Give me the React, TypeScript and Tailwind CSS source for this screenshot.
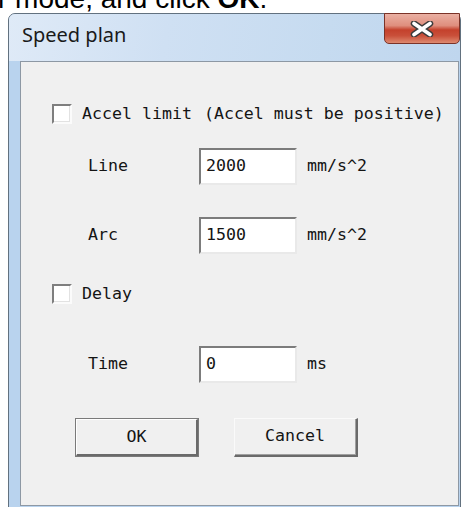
import React from "react";

const mono = "font-['DejaVu_Sans_Mono',monospace] text-[16.6px] leading-none text-[#141414]";

function Check() {
  return (
    <div className="w-[20px] h-[20px] shrink-0 border-t-2 border-l-2 border-t-[#7e7e7e] border-l-[#7e7e7e] border-b-2 border-r-2 border-b-[#fbfbfb] border-r-[#fbfbfb]">
      <div className="w-full h-full bg-white border-b border-r border-[#e2e2e2]" />
    </div>
  );
}

function Field({ value }: { value: string }) {
  return (
    <div className="w-[98px] h-[37px] shrink-0 border-t-2 border-l-2 border-t-[#7c7c7c] border-l-[#7c7c7c] border-b-2 border-r-2 border-b-[#e9e9e9] border-r-[#e9e9e9] bg-white flex items-center pl-[5px]">
      <span className={mono}>{value}</span>
    </div>
  );
}

function Row({ label, value, unit }: { label: string; value: string; unit: string }) {
  return (
    <div className="flex items-center h-[37px] ml-[67px]">
      <span className={`${mono} w-[111px]`}>{label}</span>
      <Field value={value} />
      <span className={`${mono} ml-[10px]`}>{unit}</span>
    </div>
  );
}

function CloseGlyph() {
  return (
    <svg width="26" height="16" viewBox="0 0 26 16">
      <path d="M5 2.5 L21 13.5 M21 2.5 L5 13.5" stroke="#3b3b3b" strokeWidth="6.5" strokeLinecap="round" fill="none" />
      <path d="M5 2.5 L21 13.5 M21 2.5 L5 13.5" stroke="#ffffff" strokeWidth="3.6" strokeLinecap="round" fill="none" />
    </svg>
  );
}

export default function App() {
  return (
    <div className="relative w-[461px] h-[507px] overflow-hidden bg-white">
      {/* last line of the surrounding instructions, mostly scrolled out of view */}
      <div className="h-[13px] overflow-hidden">
        <p className="whitespace-nowrap font-['Liberation_Sans',Arial,sans-serif] text-[28px] leading-[28px] -mt-[15px] -ml-[2px] text-black">
          r mode, and click <b>OK</b>.
        </p>
      </div>

      {/* dialog window */}
      <div className="ml-[8px] w-[453px] h-[510px] rounded-t-[7px] border border-[#62717f] bg-[#b9d3ee] flex flex-col">
        {/* caption */}
        <div className="h-[47px] shrink-0 flex items-start rounded-t-[6px] bg-[linear-gradient(100deg,#dfeaf7_0%,#cfe0f3_35%,#c6dbf0_70%,#bfd6ee_100%)]">
          <span className="pl-[13px] pt-[11px] font-['Noto_Sans',sans-serif] text-[20px] leading-[20px] text-[#1a1a1a]">
            Speed plan
          </span>
          <div className="ml-auto -mt-[1px] w-[76px] h-[31px] rounded-b-[5px] border border-[#7b3328] bg-[linear-gradient(to_bottom,#eab0a3_0%,#df8e7d_40%,#c4412c_55%,#c9503a_75%,#de8a70_100%)] flex items-center justify-center">
            <CloseGlyph />
          </div>
        </div>

        {/* client area */}
        <div className="ml-[11px] w-[439px] h-[445px] shrink-0 border border-[#8d98a4] bg-[#f0f0f0] flex flex-col pt-[42px]">
          <div className="flex items-center h-[20px] ml-[31px]">
            <Check />
            <span className={`${mono} ml-[10px]`}>Accel limit</span>
            <span className={`${mono} ml-[12px]`}>(Accel must be positive)</span>
          </div>

          <div className="mt-[24px]">
            <Row label="Line" value="2000" unit="mm/s^2" />
          </div>
          <div className="mt-[32px]">
            <Row label="Arc" value="1500" unit="mm/s^2" />
          </div>

          <div className="mt-[30px] flex items-center h-[20px] ml-[31px]">
            <Check />
            <span className={`${mono} ml-[10px]`}>Delay</span>
          </div>

          <div className="mt-[42px]">
            <Row label="Time" value="0" unit="ms" />
          </div>

          <div className="mt-[35px] ml-[54px] flex gap-[35px]">
            <button className="w-[124px] h-[39px] border border-[#7a7a7a] bg-[#f0f0f0]">
              <div className="w-full h-full flex items-center justify-center border-t border-l border-white border-b-2 border-r-2 border-b-[#6a6a6a] border-r-[#6a6a6a]">
                <span className={mono}>OK</span>
              </div>
            </button>
            <button className="w-[124px] h-[39px] border-t border-l border-[#fafafa] border-b-2 border-r-2 border-b-[#6a6a6a] border-r-[#6a6a6a] bg-[#f0f0f0]">
              <div className="w-full h-full flex items-center justify-center border-b border-r border-[#a0a0a0]">
                <span className={mono}>Cancel</span>
              </div>
            </button>
          </div>
        </div>
      </div>
    </div>
  );
}
